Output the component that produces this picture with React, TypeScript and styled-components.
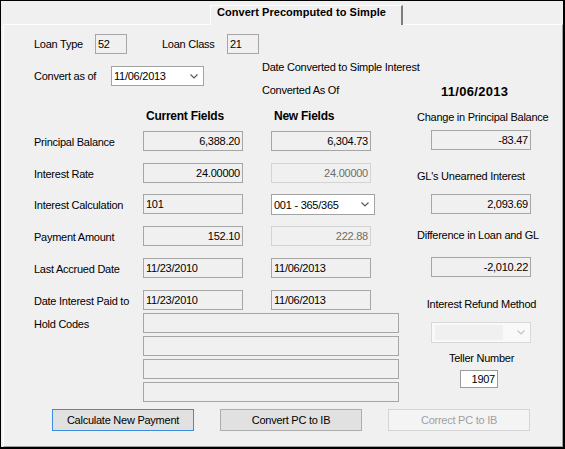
import React from "react";
import styled, { createGlobalStyle } from "styled-components";

const GlobalStyle = createGlobalStyle`
  html, body { margin: 0; padding: 0; background: #f0f0f0; }
  body {
    font-family: "Liberation Sans", Arial, sans-serif;
    font-size: 11px;
    color: #000;
    letter-spacing: -0.25px;
  }
  * { box-sizing: border-box; }
`;

const Window = styled.div`
  width: 565px;
  height: 449px;
  border-style: solid;
  border-color: #000;
  border-width: 1px 2px 2px 1px;
  background: #f0f0f0;
  display: flex;
  flex-direction: column;
`;

const TabStrip = styled.div`
  height: 23px;
  flex: none;
  display: flex;
  padding-left: 209px;
  position: relative;
  z-index: 1;
`;

const Tab = styled.div`
  margin-top: 4px;
  height: 20px;
  width: 193px;
  border-top: 1px solid #fff;
  border-left: 1px solid #fff;
  border-right: 2px solid #7d7d7d;
  background: #f0f0f0;
  font-weight: bold;
  font-size: 11px;
  letter-spacing: 0.05px;
  line-height: 13px;
  padding-left: 6px;
  white-space: nowrap;
`;

const Panel = styled.div`
  margin-left: 2px;
  width: 560px;
  flex: 1;
  border-style: solid;
  border-width: 1px;
  border-color: #fff #a0a0a0 #a0a0a0 #fff;
  padding: 9px 0 0 30px;
  display: flex;
  flex-direction: column;
`;

const TopRow = styled.div`
  display: flex;
  align-items: center;
  height: 20px;
`;

const Label = styled.span<{ $w?: number; $ml?: number }>`
  flex: none;
  width: ${(p) => (p.$w ? `${p.$w}px` : "auto")};
  margin-left: ${(p) => p.$ml ?? 0}px;
  white-space: nowrap;
  line-height: 14px;
`;

type Variant = "read" | "disabled" | "white";

const Field = styled.div<{ $w: number; $h?: number; $align?: "left" | "right"; $variant?: Variant }>`
  flex: none;
  width: ${(p) => p.$w}px;
  height: ${(p) => p.$h ?? 20}px;
  line-height: ${(p) => (p.$h ?? 20) - 2}px;
  border: 1px solid
    ${(p) => (p.$variant === "disabled" ? "#d4d4d4" : p.$variant === "white" ? "#9c9c9c" : "#a6a6a6")};
  background: ${(p) => (p.$variant === "white" ? "#fff" : "#f0f0f0")};
  color: ${(p) => (p.$variant === "disabled" ? "#6d6d6d" : "#000")};
  text-align: ${(p) => p.$align ?? "left"};
  padding: 0 2px;
  white-space: nowrap;
  overflow: hidden;
`;

const SelectBox = styled.div<{ $w: number; $h: number; $disabled?: boolean }>`
  flex: none;
  width: ${(p) => p.$w}px;
  height: ${(p) => p.$h}px;
  display: flex;
  align-items: center;
  border: 1px solid ${(p) => (p.$disabled ? "#d9d9d9" : "#a3a3a3")};
  background: ${(p) => (p.$disabled ? "#f9f9f9" : "#fff")};
  padding: 0 5px 0 2px;
  white-space: nowrap;
`;

const SelectValue = styled.span<{ $disabled?: boolean }>`
  flex: 1;
  align-self: stretch;
  margin: ${(p) => (p.$disabled ? "2px 14px 2px 1px" : "0")};
  background: ${(p) => (p.$disabled ? "#f0f0f0" : "transparent")};
  display: flex;
  align-items: center;
`;

const Chevron = ({ color }: { color: string }) => (
  <svg width="8" height="5" viewBox="0 0 8 5" style={{ flex: "none" }}>
    <path d="M0.5 0.5 L4 4 L7.5 0.5" fill="none" stroke={color} strokeWidth="1.2" />
  </svg>
);

const Select = ({
  w,
  h,
  value,
  disabled,
}: {
  w: number;
  h: number;
  value?: string;
  disabled?: boolean;
}) => (
  <SelectBox $w={w} $h={h} $disabled={disabled}>
    <SelectValue $disabled={disabled}>{value}</SelectValue>
    <Chevron color={disabled ? "#c4c4c4" : "#5a5a5a"} />
  </SelectBox>
);

const MidTop = styled.div`
  display: flex;
  height: 46px;
  flex: none;
`;

const ConvertGroup = styled.div`
  display: flex;
  align-items: center;
  margin-top: 12px;
  height: 20px;
`;

const ConvInfo = styled.div`
  margin-left: 58px;
  display: flex;
  flex-direction: column;
`;

const InfoLine = styled.div`
  margin-top: 6px;
  line-height: 14px;
  white-space: nowrap;
`;

const InfoRow = styled.div`
  margin-top: 9px;
  display: flex;
  align-items: flex-start;
  height: 16px;
`;

const BigDate = styled.span`
  font-weight: bold;
  font-size: 13px;
  line-height: 16px;
  margin-top: 1px;
  letter-spacing: 0.3px;
`;

const Main = styled.div`
  display: flex;
  height: 302px;
  flex: none;
`;

const LeftForm = styled.div`
  width: 365px;
  flex: none;
  display: flex;
  flex-direction: column;
`;

const cols = "109px 100px 28px 104px";

const HeadRow = styled.div`
  display: grid;
  grid-template-columns: ${cols};
  margin-top: 9px;
  line-height: 14px;
`;

const Heading = styled.div<{ $col: number }>`
  grid-column: ${(p) => p.$col};
  font-weight: bold;
  font-size: 12px;
  padding-left: 3px;
  white-space: nowrap;
`;

const FieldGrid = styled.div`
  display: grid;
  grid-template-columns: ${cols};
  grid-template-rows: 32px 31px 32px 32px 32px 20px;
  margin-top: 8px;
`;

const GridLabel = styled.div`
  grid-column: 1;
  height: 20px;
  display: flex;
  align-items: center;
  padding-top: 1px;
  white-space: nowrap;
`;

const Cell = styled.div<{ $col: number }>`
  grid-column: ${(p) => p.$col};
  height: 20px;
  display: flex;
  align-items: flex-start;
`;

const HoldSection = styled.div`
  display: grid;
  grid-template-columns: 109px 256px;
  margin-top: 3px;
`;

const HoldLabel = styled.div`
  margin-top: 4px;
  line-height: 14px;
`;

const HoldStack = styled.div`
  display: flex;
  flex-direction: column;
  gap: 3px;
`;

const RightCol = styled.div`
  width: 141px;
  margin-left: 12px;
  flex: none;
  display: flex;
  flex-direction: column;
`;

const RLabel = styled.div<{ $mt: number; $center?: boolean }>`
  margin-top: ${(p) => p.$mt}px;
  line-height: 14px;
  white-space: nowrap;
  padding-left: ${(p) => (p.$center ? 0 : 6)}px;
  text-align: ${(p) => (p.$center ? "center" : "left")};
`;

const RSlot = styled.div<{ $mt: number; $ml: number }>`
  margin-top: ${(p) => p.$mt}px;
  margin-left: ${(p) => p.$ml}px;
  display: flex;
`;

const ButtonRow = styled.div`
  display: flex;
  gap: 26px;
  margin-left: 18px;
  margin-top: 7px;
`;

const Button = styled.div<{ $kind: "default" | "normal" | "disabled" }>`
  width: 142px;
  height: 22px;
  display: flex;
  align-items: center;
  justify-content: center;
  border: 1px solid
    ${(p) => (p.$kind === "default" ? "#3c8de0" : p.$kind === "disabled" ? "#d5d5d5" : "#adadad")};
  background: ${(p) => (p.$kind === "disabled" ? "#f4f4f4" : "#e1e1e1")};
  color: ${(p) => (p.$kind === "disabled" ? "#a0a0a0" : "#000")};
  font-size: 11px;
  white-space: nowrap;
`;

const rows: {
  label: string;
  cur: string;
  curAlign: "left" | "right";
  next?: string;
  nextAlign?: "left" | "right";
  nextDisabled?: boolean;
  nextSelect?: boolean;
}[] = [
  { label: "Principal Balance", cur: "6,388.20", curAlign: "right", next: "6,304.73", nextAlign: "right" },
  { label: "Interest Rate", cur: "24.00000", curAlign: "right", next: "24.00000", nextAlign: "right", nextDisabled: true },
  { label: "Interest Calculation", cur: "101", curAlign: "left", next: "001 - 365/365", nextSelect: true },
  { label: "Payment Amount", cur: "152.10", curAlign: "right", next: "222.88", nextAlign: "right", nextDisabled: true },
  { label: "Last Accrued Date", cur: "11/23/2010", curAlign: "left", next: "11/06/2013", nextAlign: "left" },
  { label: "Date Interest Paid to", cur: "11/23/2010", curAlign: "left", next: "11/06/2013", nextAlign: "left" },
];

export default function App() {
  return (
    <>
      <GlobalStyle />
      <Window>
        <TabStrip>
          <Tab>Convert Precomputed to Simple</Tab>
        </TabStrip>
        <Panel>
          <TopRow>
            <Label $w={61}>Loan Type</Label>
            <Field $w={32}>52</Field>
            <Label $w={65} $ml={35}>
              Loan Class
            </Label>
            <Field $w={32}>21</Field>
          </TopRow>

          <MidTop>
            <ConvertGroup>
              <Label $w={77}>Convert as of</Label>
              <Select w={93} h={20} value="11/06/2013" />
            </ConvertGroup>
            <ConvInfo>
              <InfoLine>Date Converted to Simple Interest</InfoLine>
              <InfoRow>
                <Label $w={179}>Converted As Of</Label>
                <BigDate>11/06/2013</BigDate>
              </InfoRow>
            </ConvInfo>
          </MidTop>

          <Main>
            <LeftForm>
              <HeadRow>
                <Heading $col={2}>Current Fields</Heading>
                <Heading $col={4}>New Fields</Heading>
              </HeadRow>
              <FieldGrid>
                {rows.map((r) => (
                  <React.Fragment key={r.label}>
                    <GridLabel>{r.label}</GridLabel>
                    <Cell $col={2}>
                      <Field $w={100} $align={r.curAlign}>
                        {r.cur}
                      </Field>
                    </Cell>
                    <Cell $col={4}>
                      {r.nextSelect ? (
                        <Select w={104} h={21} value={r.next} />
                      ) : (
                        <Field $w={100} $align={r.nextAlign} $variant={r.nextDisabled ? "disabled" : "read"}>
                          {r.next}
                        </Field>
                      )}
                    </Cell>
                  </React.Fragment>
                ))}
              </FieldGrid>
              <HoldSection>
                <HoldLabel>Hold Codes</HoldLabel>
                <HoldStack>
                  {[0, 1, 2, 3].map((i) => (
                    <Field key={i} $w={256} />
                  ))}
                </HoldStack>
              </HoldSection>
            </LeftForm>

            <RightCol>
              <RLabel $mt={10}>Change in Principal Balance</RLabel>
              <RSlot $mt={6} $ml={20}>
                <Field $w={100} $align="right">
                  -83.47
                </Field>
              </RSlot>
              <RLabel $mt={19}>GL's Unearned Interest</RLabel>
              <RSlot $mt={11} $ml={20}>
                <Field $w={100} $align="right">
                  2,093.69
                </Field>
              </RSlot>
              <RLabel $mt={14}>Difference in Loan and GL</RLabel>
              <RSlot $mt={15} $ml={20}>
                <Field $w={100} $align="right">
                  -2,010.22
                </Field>
              </RSlot>
              <RLabel $mt={20} $center>
                Interest Refund Method
              </RLabel>
              <RSlot $mt={11} $ml={20}>
                <Select w={100} h={21} disabled />
              </RSlot>
              <RLabel $mt={8} $center>
                Teller Number
              </RLabel>
              <RSlot $mt={5} $ml={49}>
                <Field $w={38} $h={18} $align="right" $variant="white">
                  1907
                </Field>
              </RSlot>
            </RightCol>
          </Main>

          <ButtonRow>
            <Button $kind="default">Calculate New Payment</Button>
            <Button $kind="normal">Convert PC to IB</Button>
            <Button $kind="disabled">Correct PC to IB</Button>
          </ButtonRow>
        </Panel>
      </Window>
    </>
  );
}
